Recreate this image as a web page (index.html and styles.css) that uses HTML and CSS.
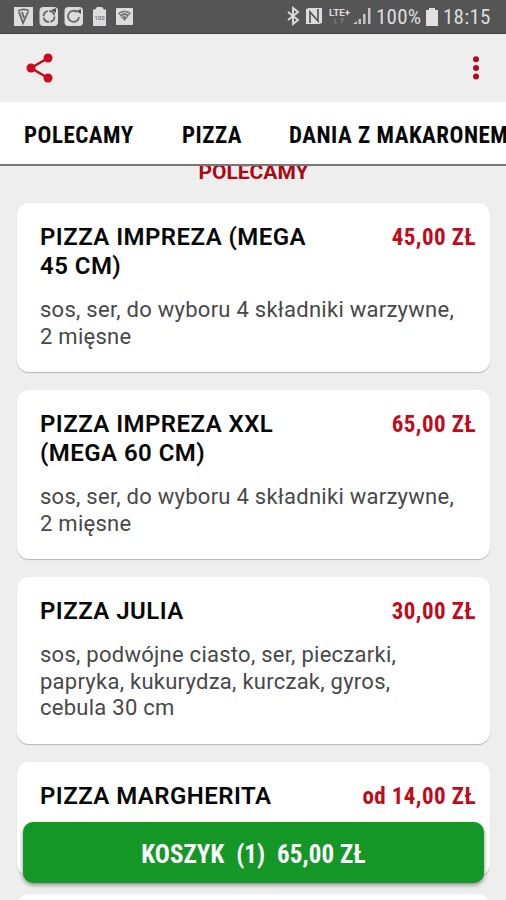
FILE: index.html
```html
<!DOCTYPE html>
<html lang="pl">
<head>
<meta charset="utf-8">
<title>Menu</title>
<link rel="stylesheet" href="styles.css">
</head>
<body>
<div class="phone">
  <header class="status">
    <div class="notices">
      <svg width="120" height="22" viewBox="0 0 120 22">
        <g fill="#dcdcdc"><path d="M1 2h19v19H1z"/><rect x="26.500" y="2" width="18.500" height="19" rx="4"/><rect x="51.500" y="2" width="18.500" height="19" rx="4"/><path d="M80 4.500h2l2-2.500h5l2 2.500h2V21H80z"/><rect x="103" y="3" width="17" height="17" rx="1"/></g>
        <g fill="none" stroke="#666" stroke-width="1.800"><path d="M5 6c4-2 8-2 11 0M6 7l4 11 5-11M9 7l2 6"/><circle cx="36" cy="11.500" r="5.500" stroke-dasharray="7 1.500"/><path d="M64 7a5.500 5.500 0 1 0 2 5"/></g>
        <path d="M38 5l5 3V3zM63 6l5 3V4z" fill="#555"/>
        <path d="M105 8q6.500-5 13 0l-6.500 8z" fill="#777"/><path d="M107 9q4.500-3 9 0M109 11.500q2.500-2 5 0" fill="none" stroke="#ddd"/>
        <text x="81.500" y="14.500" class="tiny" textLength="10">100</text>
      </svg>
    </div>
    <div class="system">
      <svg width="86" height="22" viewBox="0 0 86 22">
        <path d="M1 7l10 8-5 4V3l5 4L1 15" fill="none" stroke="#dcdcdc" stroke-width="1.900"/>
        <path d="M19 4l3-1h13v15l-3 1H19z" fill="#dcdcdc"/><path d="M23 18V7l8 9V4" fill="none" stroke="#555" stroke-width="1.700"/>
        <text x="42" y="10.500" class="lte" textLength="21" lengthAdjust="spacingAndGlyphs">LTE+</text>
        <path d="M48 14v4h2M53 14h4m-2 0v4" fill="none" stroke="#858585"/>
        <path d="M66 19l4-3v3zM71.500 14H74v5h-2.500zM76 9h2.500v10H76zM81 3h2.500v16H81z" fill="#c4c4c4"/>
      </svg>
      <span class="percent"><span class="narrow">100%</span></span>
      <svg class="battery" width="12" height="18" viewBox="0 0 12 18"><path d="M3 0h6v2h3v16H0V2h3z" fill="#e2e2e2"/></svg>
      <span class="clock"><span class="narrow">18:15</span></span>
    </div>
  </header>
  <div class="toolbar">
    <svg width="28" height="30" viewBox="0 0 28 30"><path d="M22 5L5 15l17 10" fill="none" stroke="#c20d20" stroke-width="2.600"/><g fill="#ce0820"><circle cx="22" cy="5" r="4.500"/><circle cx="5" cy="15" r="4.500"/><circle cx="22" cy="25" r="4.500"/></g></svg>
    <svg width="8" height="26" viewBox="0 0 8 26"><g fill="#b4081b"><circle cx="4" cy="4.300" r="3"/><circle cx="4" cy="13" r="3"/><circle cx="4" cy="21.600" r="3"/></g></svg>
  </div>
  <nav class="tabs">
    <a class="tab first"><span class="narrow">POLECAMY</span></a>
    <a class="tab second"><span class="narrow">PIZZA</span></a>
    <a class="tab third"><span class="narrow">DANIA Z MAKARONEM</span></a>
  </nav>
  <main class="list">
    <h1 class="section">POLECAMY</h1>
    <article class="card">
      <div class="head"><h2>PIZZA IMPREZA (MEGA<br>45 CM)</h2><span class="price"><span class="narrow">45,00 ZŁ</span></span></div>
      <p>sos, ser, do wyboru 4 składniki warzywne,<br>2 mięsne</p>
    </article>
    <article class="card">
      <div class="head"><h2>PIZZA IMPREZA XXL<br>(MEGA 60 CM)</h2><span class="price"><span class="narrow">65,00 ZŁ</span></span></div>
      <p>sos, ser, do wyboru 4 składniki warzywne,<br>2 mięsne</p>
    </article>
    <article class="card julia">
      <div class="head"><h2>PIZZA JULIA</h2><span class="price"><span class="narrow">30,00 ZŁ</span></span></div>
      <p>sos, podwójne ciasto, ser, pieczarki,<br>papryka, kukurydza, kurczak, gyros,<br>cebula 30 cm</p>
    </article>
    <article class="card last">
      <div class="head"><h2>PIZZA MARGHERITA</h2><span class="price"><span class="narrow">od 14,00 ZŁ</span></span></div>
    </article>
    <article class="card"></article>
  </main>
  <button class="basket"><span class="narrow">KOSZYK&nbsp; (1)&nbsp; 65,00 ZŁ</span></button>
</div>
</body>
</html>
```
FILE: styles.css
```css
* { box-sizing: border-box; }
body { margin: 0; font-family: "Roboto Condensed", Roboto, sans-serif; }
h1, h2, p { margin: 0; }
.phone { position: relative; width: 506px; height: 900px; overflow: hidden; background: #eee; display: flex; flex-direction: column; }
.status { height: 34px; flex: none; background: #555; border-bottom: 1px solid #414141; display: flex; justify-content: space-between; padding: 5px 15px 0 13px; color: #dedede; }
.system { display: flex; align-items: flex-start; }
.narrow { display: inline-block; white-space: nowrap; font-stretch: 75%; }
.percent, .clock { font-size: 21px; line-height: 24px; letter-spacing: .25px; }
.percent { width: 44px; margin-left: 3px; }
.clock { width: 48px; margin-left: 5px; }
.battery { margin: 3px 0 0 6px; }
.tiny { font: 6px Roboto, sans-serif; fill: #555; }
.lte { font: bold 9px Roboto, sans-serif; fill: #ddd; }
.toolbar { height: 68px; flex: none; padding: 0 26px; display: flex; justify-content: space-between; align-items: center; }
.tabs { height: 64px; flex: none; background: #fff; border-bottom: 2px solid #777; display: flex; align-items: center; padding: 4px 0 0 24px; overflow: hidden; }
.tab { flex: none; font-size: 23px; font-weight: 700; color: #080808; letter-spacing: .5px; }
.first { width: 158px; }
.second { width: 107px; }
.list { flex: 1; min-height: 0; overflow: hidden; padding: 0 16px 0 17px; }
.section { height: 37px; margin-top: -7px; margin-bottom: 7px; text-align: center; font-family: Roboto, sans-serif; font-size: 21px; line-height: 27px; font-weight: 700; color: #ab0914; }
.card { height: 169px; margin-bottom: 18px; background: #fff; border-radius: 12px; box-shadow: 0 1px 1px #b5b5b5; padding: 20px 14px 0 23px; }
.julia { height: 167px; }
.last { height: 114px; }
.head { display: flex; justify-content: space-between; }
h2 { font-family: Roboto, sans-serif; font-size: 24px; line-height: 29px; font-weight: 600; color: #080808; letter-spacing: .45px; white-space: nowrap; }
.price { font-size: 23px; line-height: 29px; font-weight: 700; color: #c30a1a; letter-spacing: .4px; }
p { margin-top: 16px; font-family: Roboto, sans-serif; font-size: 22px; line-height: 26.5px; letter-spacing: .26px; color: #484848; white-space: nowrap; }
.basket { position: absolute; left: 23px; top: 822px; width: 461px; height: 61px; border: 0; border-radius: 10px; background: #159728; box-shadow: 0 2px 4px #8a8a8a; color: #fff; font: 700 25px "Roboto Condensed", Roboto, sans-serif; letter-spacing: .1px; padding: 4px 0 0; }
```
